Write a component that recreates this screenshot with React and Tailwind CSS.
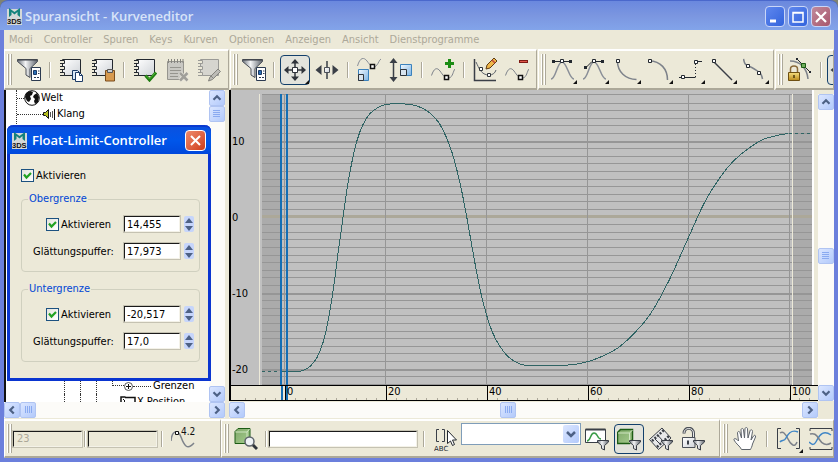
import { useState } from 'react';
import clsx from 'clsx';

const MENU = ['Modi', 'Controller', 'Spuren', 'Keys', 'Kurven', 'Optionen', 'Anzeigen', 'Ansicht', 'Dienstprogramme'];

// curve keys in plot coordinates
const CURVE = [
  [22, 281], [36, 281], [44, 280], [51, 276], [58, 267], [64, 252], [69, 231], [74, 201], [79, 163],
  [84, 127], [88, 99], [93, 71], [98, 50], [104, 34], [111, 23], [121, 16], [131, 13.5], [146, 13.5],
  [158, 15.500], [169, 21], [179, 31], [187, 46], [193, 62], [198, 80], [203, 102], [208, 128], [216, 173],
  [222, 203], [228, 226], [234, 243], [241, 256], [249, 266], [258, 272], [268, 275], [301, 275],
  [321, 273], [338, 268], [358, 258], [374, 244], [391, 224], [410, 190], [429, 148], [445, 113],
  [461, 87], [474, 71], [488, 59], [504, 49], [518, 45], [529, 43],
];

function smoothPath(pts) {
  let d = `M${pts[0][0]} ${pts[0][1]}`;
  for (let i = 0; i < pts.length - 1; i++) {
    const a = pts[i - 1] || pts[i];
    const b = pts[i];
    const c = pts[i + 1];
    const e = pts[i + 2] || c;
    d += `C${b[0] + (c[0] - a[0]) / 6} ${b[1] + (c[1] - a[1]) / 6} ${c[0] - (e[0] - b[0]) / 6} ${c[1] - (e[1] - b[1]) / 6} ${c[0]} ${c[1]}`;
  }
  return d;
}

/* ---------- icons ---------- */

function Icon({ children, className = 'w-6 h-6' }) {
  return (
    <svg viewBox="0 0 24 24" className={clsx('shrink-0', className)} fill="none" stroke="#3a3f47" aria-hidden="true">
      {children}
    </svg>
  );
}

function Defs() {
  return (
    <svg className="absolute w-0 h-0" aria-hidden="true">
      <defs>
        <linearGradient id="metal" x1="0" x2="1">
          <stop offset="0" stopColor="#6d737b" />
          <stop offset=".4" stopColor="#f4f5f6" />
          <stop offset="1" stopColor="#5d636b" />
        </linearGradient>
        <linearGradient id="page" x1="0" x2="1" y2="1">
          <stop offset="0" stopColor="#ffffff" />
          <stop offset="1" stopColor="#cfd3d8" />
        </linearGradient>
        <linearGradient id="gold" y2="1" x2="0">
          <stop offset="0" stopColor="#f6dd7e" />
          <stop offset="1" stopColor="#b98a1c" />
        </linearGradient>
        <linearGradient id="blue" x2="1" y2="1">
          <stop offset="0" stopColor="#f2f9ff" />
          <stop offset="1" stopColor="#7db4e4" />
        </linearGradient>
        <linearGradient id="green" x2="1" y2="1">
          <stop offset="0" stopColor="#7fa869" />
          <stop offset="1" stopColor="#a5cc8e" />
        </linearGradient>
      </defs>
    </svg>
  );
}

const FilterIcon = () => (
  <Icon>
    <path d="M.5 1.500h20v2l-7.500 7v9l-4-2.500V10.500L.5 3.500z" fill="url(#metal)" stroke="#4a4f57" />
    <path d="M1 2h19" stroke="#3a3f47" />
    <path d="M14.500 9.500h9v13h-9z" fill="#fff" stroke="#2b3a50" />
    <path d="M16.500 12.500h3v4h-3z" fill="#2a6fb5" stroke="#1c3b66" />
    <path d="M21 13h1.500M21 15.500h1.500M17 19.500h2M20 19.500h2" stroke="#2b3a50" />
  </Icon>
);

function Notebook({ dim, children }) {
  const c = dim ? '#9a9a96' : '#23282f';
  return (
    <Icon>
      <path d="M3.500 1.500h18v16h-18z" fill={dim ? '#d6d5cf' : 'url(#page)'} stroke={c} />
      {[3, 9, 15].map(y => (
        <path key={y} d={`M1 ${y - .5}h4.500v3H1`} stroke={c} fill="#ece9d8" />
      ))}
      {children}
    </Icon>
  );
}

const CopyIcon = () => (
  <Notebook>
    <path d="M13.500 12.500h5l2 2v7h-7z" fill="#dbe9f7" stroke="#1c3b66" />
    <path d="M16.500 14.500h4l3 3v6h-7z" fill="#fff" stroke="#1c3b66" />
    <path d="M20.500 14.500v3h3" stroke="#1c3b66" />
  </Notebook>
);

const PasteIcon = () => (
  <Notebook>
    <path d="M14.500 12.500h9v10.500h-9z" fill="#d79a50" stroke="#7a4d1c" />
    <path d="M16.500 11.500h5v3h-5z" fill="#c9ccd0" stroke="#555" />
  </Notebook>
);

const CheckIcon = () => (
  <Notebook>
    <path d="M12.500 17.500l4 4.500L23 14.500" stroke="#1f7d12" strokeWidth="3" />
    <path d="M13 17.500l3.500 3.500L22.500 14.500" stroke="#52b933" />
  </Notebook>
);

const DeletePadIcon = () => (
  <Icon>
    <path d="M2.500 3.500h16v18h-16z" fill="#c9c8c3" stroke="#96958f" />
    <path d="M3.500 1v4M6.500 1v4M9.500 1v4M12.500 1v4M15.500 1v4M18 1v4" stroke="#85847f" />
    <path d="M5 9.500h11M5 12.500h11M5 15.500h8M5 18.500h8" stroke="#96958f" />
    <path d="M15 15l7.500 7.500M22.500 15L15 22.500" stroke="#e8e6dc" strokeWidth="4" />
    <path d="M15 15l7.500 7.500M22.500 15L15 22.500" stroke="#a09f9a" strokeWidth="2.500" />
  </Icon>
);

const EditPadIcon = () => (
  <Notebook dim>
    <path d="M11.500 23l1.500-4 8-8 2.500 2.500-8 8z" fill="#bcbbb6" stroke="#85847f" />
    <path d="M14 18l3 3" stroke="#85847f" />
  </Notebook>
);

const MoveIcon = () => (
  <Icon>
    <path d="M12 3v6M12 15v6M3 12h6M15 12h6" stroke="#2f343b" strokeWidth="1.500" />
    <path d="M12 1l4 4.500H8zM12 23l4-4.500H8zM1 12l4.500-4v8zM23 12l-4.500-4v8z" fill="#2f343b" stroke="none" />
    <path d="M9.500 9.500h5v5h-5z" fill="#fff" stroke="#2f343b" />
  </Icon>
);

const SlideIcon = () => (
  <Icon>
    <path d="M.5 12l6-5v10zM23.500 12l-6-5v10z" fill="#3a3f47" stroke="none" />
    <path d="M12 3v18" strokeWidth="1.500" />
    <path d="M9.500 9.500h5v5h-5z" fill="url(#page)" stroke="#4a4f57" />
  </Icon>
);

const ScaleKeysIcon = () => (
  <Icon>
    <path d="M.5 8C3-1 7-1 10 3s6 8 9 5 3-6 5-7" stroke="#8a8f98" />
    <path d="M13.500 6.500h4v4h-4z" fill="#fff" stroke="#111" strokeWidth="1.500" />
    <path d="M1.500 11.500h10v11h-10z" fill="url(#blue)" stroke="#3b82bd" />
    <path d="M1.500 16.500h5v6h-5z" fill="#d8e4ee" stroke="#2f343b" />
  </Icon>
);

const ScaleValuesIcon = () => (
  <Icon>
    <path d="M4.500 4v16" strokeWidth="1.500" />
    <path d="M4.500 0l4 5h-8zM4.500 24l4-5h-8z" fill="#3a3f47" stroke="none" />
    <path d="M11.500 6.500h11v11h-11z" fill="url(#blue)" stroke="#3b82bd" />
    <path d="M11.500 11.500h6v6h-6z" fill="#d8e4ee" stroke="#2f343b" />
  </Icon>
);

const Wave = () => (
  <>
    <path d="M.5 17.500C3 10 6 9 9 13s5 8 9 7 4-7 6-9" stroke="#7d828a" />
    <path d="M13.500 17.500h4v4h-4z" fill="#fff" stroke="#111" strokeWidth="1.500" />
  </>
);

const AddKeyIcon = () => (
  <Icon>
    <Wave />
    <path d="M18.500 1v9M14 5.500h9" stroke="#1c8c14" strokeWidth="3" />
  </Icon>
);

const RemoveKeyIcon = () => (
  <Icon>
    <Wave />
    <path d="M14 3.500h9" stroke="#7f1b14" strokeWidth="3" />
    <path d="M15 3.500h7" stroke="#e0564a" />
  </Icon>
);

const DrawCurveIcon = () => (
  <Icon>
    <path d="M1.500 1v21.500H23" strokeWidth="1.500" />
    <path d="M3 4c3 6 5 13 13 13 4 0 6-2 7-5" stroke="#5d636b" />
    <path d="M6.500 9.500h3v3h-3zM14.500 15.500h3v3h-3z" fill="#fff" stroke="#2f343b" />
    <path d="M13 11l1-4 7-7 3 3-7 7z" fill="#f0b748" stroke="#5c3a12" />
    <path d="M19 2l3 3" stroke="#c24c3a" strokeWidth="1.500" />
  </Icon>
);

const TangentAuto = () => (
  <Icon>
    <path d="M0 21C5 21 6 4 11 4s7 17 12 17" stroke="#8a8f98" strokeWidth="1.500" />
    <path d="M2 3.500h18" stroke="#23282f" />
    <path d="M1 2h3v3H1zM18 2h3v3h-3z" fill="#23282f" stroke="none" />
    <path d="M9.500 1.500h3v3h-3z" fill="#fff" stroke="#23282f" />
  </Icon>
);

const TangentSpline = () => (
  <Icon>
    <path d="M0 21C5 21 6 4 11 4s7 17 12 17" stroke="#8a8f98" strokeWidth="1.500" />
    <path d="M3 9.500l6-6h11" stroke="#23282f" />
    <path d="M1 8h3v3H1zM18 2h3v3h-3z" fill="#23282f" stroke="none" />
    <path d="M9.500 1.500h3v3h-3z" fill="#fff" stroke="#23282f" />
  </Icon>
);

const TangentFast = () => (
  <Icon>
    <path d="M2.500 3.500c0 10 8 18 19 18" stroke="#7d828a" strokeWidth="1.500" />
    <path d="M1.500 1.500h3v3h-3z" fill="#fff" stroke="#23282f" />
  </Icon>
);

const TangentSlow = () => (
  <Icon>
    <path d="M2.500 3c11 0 18 8 18 19" stroke="#7d828a" strokeWidth="1.500" />
    <path d="M1.500 1.500h3v3h-3z" fill="#fff" stroke="#23282f" />
  </Icon>
);

const TangentStep = () => (
  <Icon>
    <path d="M0 19.500h16.500" stroke="#23282f" />
    <path d="M16.500 19V4" stroke="#23282f" strokeDasharray="1 2" />
    <path d="M17 3.500h6" stroke="#23282f" />
    <path d="M2.500 17.500h3v3h-3zM15.500 2.500h3v3h-3z" fill="#fff" stroke="#23282f" />
  </Icon>
);

const TangentLinear = () => (
  <Icon>
    <path d="M2 3l19 19" stroke="#3a3f47" strokeWidth="1.500" />
    <path d="M1.500 1.500h3v3h-3z" fill="#fff" stroke="#23282f" />
  </Icon>
);

const TangentSmooth = () => (
  <Icon>
    <path d="M.5 1c1 5 2 6 5 7s6 3 9 5 4 3 5 8" stroke="#7d828a" strokeWidth="1.500" />
    <path d="M3.500 6.500h3v3h-3zM14.500 13.500h3v3h-3z" fill="#fff" stroke="#23282f" />
  </Icon>
);

const LockTangentIcon = () => (
  <Icon>
    <path d="M2 3c10 0 17 7 18 18" stroke="#7d828a" strokeWidth="1.500" />
    <path d="M9 1l13 13" stroke="#23282f" />
    <path d="M8 0h2v2H8zM21 13h2v2h-2z" fill="#23282f" stroke="none" />
    <path d="M13.500 5.500h4v4h-4z" fill="#6fae5c" stroke="#1c5c14" />
    <path d="M2.500 15v-4c0-4 7-4 7 0v4" stroke="#8a6a3a" strokeWidth="1.500" />
    <path d="M.5 14.500h11v8H.5z" fill="url(#gold)" stroke="#6e4f10" />
    <path d="M6 17v3" stroke="#4d370b" strokeWidth="1.500" />
  </Icon>
);

const ParamCurveIcon = () => (
  <Icon>
    <path d="M1 4.500l3-3h12v11l-3 4H1z" fill="url(#green)" stroke="#1c5c14" />
    <path d="M1.500 5h11.500V16M13 5l2.500-3" stroke="#cfe6c2" />
    <circle cx="15.500" cy="14.500" r="4.500" fill="#eef2f5" stroke="#5d636b" strokeWidth="1.500" />
    <path d="M19 18l4 4" stroke="#2f343b" strokeWidth="3" />
  </Icon>
);

const SmallFunnel = () => (
  <path d="M12.500 13.500h11v1.500l-4 3.500v4.500l-3-1.500v-3l-4-3.500z" fill="url(#metal)" stroke="#3a3f47" />
);

const CurveFilterIcon = () => (
  <Icon>
    <path d="M.5 2.500h20v13H.5z" fill="#fff" stroke="#3a3f47" />
    <path d="M.5 2.500h20" stroke="#3a3f47" strokeWidth="2" />
    <path d="M2 14c4 0 3-8 7-8s3 6 7 6" stroke="#3a9c48" strokeWidth="1.500" />
    <SmallFunnel />
  </Icon>
);

const CubeFilterIcon = () => (
  <Icon>
    <path d="M.5 5.500l3-3h12v10l-3 4H.5z" fill="url(#green)" stroke="#1c5c14" strokeWidth="1.500" />
    <path d="M1 6h11.500v10M12.500 6l3-3" stroke="#cfe6c2" />
    <SmallFunnel />
  </Icon>
);

const FilmFilterIcon = () => (
  <Icon>
    <path d="M.5 12.500L13 1l9 10-12.500 11.500z" fill="#e8e9ea" stroke="#3a3f47" />
    <path d="M3 14L15 3M8 20L20 9" stroke="#3a3f47" strokeWidth="2.500" strokeDasharray="2 1.500" />
    <path d="M9 8.500l5 5.500M6 12l5 5" stroke="#3a3f47" />
    <SmallFunnel />
  </Icon>
);

const UnlockFilterIcon = () => (
  <Icon>
    <path d="M3 6.500c0-7 9.500-7 9.500 0v4" stroke="#4a4f57" strokeWidth="3" />
    <path d="M3 6c0-6 9.500-6 9.500 0v5" stroke="#e8e9ea" />
    <path d="M1.500 10.500h12.500v10H1.500z" fill="url(#page)" stroke="#4a4f57" />
    <path d="M7 13.500v4" strokeWidth="2" />
    <SmallFunnel />
  </Icon>
);

const HandIcon = () => (
  <Icon>
    <path
      d="M8.500 22.500C7 19 3 17 1 13c-.5-2 2-2 4.500 1L4.500 6c0-2 2.500-2 2.500 0l1.500 5L8 3c0-2 2.500-2 2.500 0l1 8 .5-9c0-2 2.500-2 2.500 0l.5 9 2-7c.5-2 2.500-1.500 2.500.5L18 13l2.500-4c1-1.500 2.500-.5 2 1l-3 7c-.5 3-1.500 4-2 5.500z"
      fill="#fff" stroke="#5d636b"
    />
  </Icon>
);

const ExtentsHIcon = () => (
  <Icon>
    <path d="M4 1.500H.5v20H4M19 1.500h3.500v20H19" />
    <path d="M3 6c3-2 5 0 8 6s7 9 9 3" stroke="#7d828a" strokeWidth="1.500" />
    <path d="M3 15c2-3 4 0 6-4s5-9 12-6" stroke="#3f86c6" strokeWidth="1.500" />
  </Icon>
);

const ExtentsVIcon = () => (
  <Icon>
    <path d="M1 4V1.500h22V4M1 20v2.500h22V20" />
    <path d="M0 15c3 3 5 4 8-2s7-10 14-5" stroke="#3f86c6" strokeWidth="1.500" />
    <path d="M1 7c4-1 6 0 9 5s7 7 12 4" stroke="#7d828a" strokeWidth="1.500" />
  </Icon>
);

function AppLogo() {
  return (
    <svg viewBox="0 0 16 17" className="w-4 h-[17px] shrink-0" aria-hidden="true">
      <path d="M0 1h15v16H0z" fill="#d4d8d8" />
      <path d="M2 9V0l5.500 4L13 0v9l-2.500-2V4L7.500 6.500 4.500 4v3z" fill="#13827c" />
      <text x="0" y="16" fontSize="7.500" fontWeight="700" fontFamily="Liberation Sans, sans-serif" fill="#111">3DS</text>
    </svg>
  );
}

/* ---------- building blocks ---------- */

const Grip = () => (
  <span className="flex gap-px my-[3px] shrink-0">
    <span className="w-0.5 border-l border-white bg-[#aca899]" />
    <span className="w-0.5 border-l border-white bg-[#aca899]" />
  </span>
);

const Sep = ({ className = 'w-[10px]' }) => (
  <span className={clsx('flex justify-center shrink-0', className)}>
    <span className="w-0.5 h-4 bg-[#aca899] border-r border-white" />
  </span>
);

function ToolPanel({ label, className, children }) {
  return (
    <div
      role="toolbar"
      aria-label={label}
      className={clsx('flex items-center border-t-2 border-l border-t-white border-l-white border-r border-b-2 border-r-[#aca899] border-b-[#aca899] pl-0.5 overflow-hidden', className)}
    >
      <span className="self-stretch flex mr-px"><Grip /></span>
      {children}
    </div>
  );
}

function Tool({ label, active, flyout, children, className = 'w-8' }) {
  return (
    <button
      type="button"
      aria-label={label}
      className={clsx('relative h-8 shrink-0 flex items-center justify-center', className)}
    >
      {active && <span className="absolute inset-px rounded-sm border border-[#123f6b] bg-[#e2e3dc]" />}
      <span className="relative">{children}</span>
      {flyout && (
        <svg viewBox="0 0 4 4" className="absolute right-0.5 bottom-0.5 w-1 h-1" aria-hidden="true">
          <path d="M4 0v4H0z" fill="#111" />
        </svg>
      )}
    </button>
  );
}

function Arrow({ dir }) {
  const rot = { up: 0, right: 90, down: 180, left: 270 }[dir];
  return (
    <svg viewBox="0 0 16 16" className="w-4 h-4" aria-hidden="true">
      <path d="M4 10l4-4 4 4" transform={`rotate(${rot} 8 8)`} fill="none" stroke="#4d6185" strokeWidth="2.500" />
    </svg>
  );
}

const barPart = 'shrink-0 w-4 h-4 flex items-center justify-center rounded-xs border border-[#b0c4f2] bg-linear-to-br from-[#dbe6ff] to-[#b3cafb]';

function ScrollBar({ vertical, before, after, label, className }) {
  return (
    <div role="group" aria-label={label} className={clsx('flex shrink-0 bg-[#fcfbf8]', vertical ? 'flex-col w-4' : 'h-4', className)}>
      <button type="button" aria-label="Zurück" className={barPart}><Arrow dir={vertical ? 'up' : 'left'} /></button>
      <span style={{ flexGrow: before }} />
      <span className={barPart}>
        <svg viewBox="0 0 8 8" className={clsx('w-2 h-2', !vertical && 'rotate-90')} aria-hidden="true">
          <path d="M0 .5h7M0 2.500h7M0 4.500h7M0 6.500h7" stroke="#8aaaf0" />
        </svg>
      </span>
      <span style={{ flexGrow: after }} />
      <button type="button" aria-label="Weiter" className={barPart}><Arrow dir={vertical ? 'down' : 'right'} /></button>
    </div>
  );
}

function Check({ children }) {
  const [on, setOn] = useState(true);
  return (
    <label className="flex items-center gap-0.5">
      <span className="relative w-[13px] h-[13px]">
        <input
          type="checkbox"
          checked={on}
          onChange={() => setOn(!on)}
          className="block appearance-none w-[13px] h-[13px] border border-[#1c5180] bg-linear-to-br from-[#e4e4de] to-white"
        />
        {on && (
          <svg viewBox="0 0 13 13" className="absolute inset-0 pointer-events-none" aria-hidden="true">
            <path d="M3 5.500l2.500 3L10 4" fill="none" stroke="#21a121" strokeWidth="2.200" />
          </svg>
        )}
      </span>
      {children}
    </label>
  );
}

const sunken = 'h-4 border border-t-[#1a1a1a] border-l-[#1a1a1a] border-r-[#f4f2e8] border-b-[#f4f2e8] outline-1 outline-[#c5c2b2] -outline-offset-0';

function Spinner({ id, label, initial }) {
  const [value, setValue] = useState(initial);
  const step = n => setValue((parseFloat(value.replace(',', '.')) + n).toFixed(3).replace('.', ','));
  return (
    <div className="flex items-center gap-1">
      <input
        id={id}
        aria-label={label}
        value={value}
        onChange={e => setValue(e.target.value)}
        className={clsx(sunken, 'w-[56px] bg-white pl-0.5 leading-3')}
      />
      <span className="flex flex-col w-2.5 h-4 rounded-xs bg-[#c6d5fb]">
        <button type="button" aria-label="Erhöhen" onClick={() => step(1)} className="h-2 flex items-center justify-center">
          <svg viewBox="0 0 8 5" className="w-2 h-[5px]" aria-hidden="true"><path d="M0 5l4-5 4 5z" fill="#4d6185" /></svg>
        </button>
        <button type="button" aria-label="Verringern" onClick={() => step(-1)} className="h-2 flex items-center justify-center">
          <svg viewBox="0 0 8 5" className="w-2 h-[5px]" aria-hidden="true"><path d="M0 0l4 5 4-5z" fill="#4d6185" /></svg>
        </button>
      </span>
    </div>
  );
}

function LimitGroup({ title, name, limit, buffer }) {
  return (
    <fieldset className="min-w-0 h-[79px] border border-[#d0d0bf] rounded px-1 pr-[5px]">
      <legend className="ml-0.5 px-px leading-3 text-[#0046d5]">{title}</legend>
      <div className="flex items-center justify-between mt-[11px] pl-5">
        <Check>Aktivieren</Check>
        <Spinner label={title} initial={limit} />
      </div>
      <div className="flex items-center justify-between mt-[11px] pl-[7px]">
        <label htmlFor={name}>Glättungspuffer:</label>
        <Spinner id={name} initial={buffer} />
      </div>
    </fieldset>
  );
}

function LimitDialog({ onClose }) {
  return (
    <div
      role="dialog"
      aria-label="Float-Limit-Controller"
      className="absolute left-[7px] top-[125px] w-[204px] rounded-t-md border-3 border-t-0 border-[#0a35d0] bg-[#ece9d8]"
    >
      <div className="-mx-[3px] h-[29px] rounded-t-md flex items-center pl-[5px] pr-[5px] gap-1 bg-linear-to-b from-[#0a52e0] via-[#0056ea] to-[#0048dc] border-t-2 border-[#0a3ad0]">
        <AppLogo />
        <span className="flex-1 font-['Open_Sans',sans-serif] font-semibold text-[13px] text-white whitespace-nowrap">Float-Limit-Controller</span>
        <button
          type="button"
          aria-label="Schließen"
          onClick={onClose}
          className="shrink-0 w-[21px] h-[21px] flex items-center justify-center rounded-sm border border-white bg-linear-to-br from-[#ee8a6c] to-[#cf3a12]"
        >
          <svg viewBox="0 0 13 13" className="w-[13px] h-[13px]" aria-hidden="true">
            <path d="M2 2l9 9M11 2l-9 9" stroke="#fff" strokeWidth="2" />
          </svg>
        </button>
      </div>
      <div className="pt-[15px] px-[11px] pr-2 pb-4">
        <Check>Aktivieren</Check>
        <div className="flex flex-col gap-[11px] mt-[11px]">
          <LimitGroup title="Obergrenze" name="obergrenze-puffer" limit="14,455" buffer="17,973" />
          <LimitGroup title="Untergrenze" name="untergrenze-puffer" limit="-20,517" buffer="17,0" />
        </div>
      </div>
    </div>
  );
}

function Tree() {
  return (
    <div className="flex-1 min-w-0 flex flex-col justify-between overflow-hidden bg-white border-l-2 border-[#111] leading-4">
      <ul className="ml-2.5 pb-4 border-l border-dotted border-[#333]">
        <li className="h-4 flex items-center">
          <span className="w-[7px] border-t border-dotted border-[#333]" />
          <svg viewBox="0 0 16 16" className="w-4 h-4 mr-px" aria-hidden="true">
            <circle cx="8" cy="8" r="7.300" fill="#fff" stroke="#111" />
            <path d="M2 3l4-2 3 1-1 3-2 1 1 3-2 3-2-1-2-4zM10 5l3-2 2 4-1 5-3 2-1-3 1-2-2-2z" fill="#111" />
          </svg>
          Welt
        </li>
        <li className="h-4 flex items-center">
          <span className="w-[26px] border-t border-dotted border-[#333]" />
          <svg viewBox="0 0 12 12" className="w-3 h-3 mr-0.5" aria-hidden="true">
            <path d="M.5 4.500h2l3-3v9l-3-3h-2z" fill="#b8c020" stroke="#111" />
            <path d="M7.500 4v5M9.500 3v7" stroke="#555" />
            <path d="M11.500 1v11" stroke="#111" />
          </svg>
          Klang
        </li>
      </ul>
      <ul className="pl-[58px] shrink-0 -mb-2">
        {['Grenzen', 'X-Position'].map((name, i) => (
          <li key={name} className="h-4 flex items-center">
            {[0, 1, 2].map(n => <span key={n} className="w-4 h-4 shrink-0 border-l border-dotted border-[#333]" />)}
            {i === 0 ? (
              <>
                <span className="w-3 h-2 mb-2 shrink-0 border-l border-b border-dotted border-[#333]" />
                <svg viewBox="0 0 9 9" className="w-[9px] h-[9px] shrink-0" aria-hidden="true">
                  <circle cx="4.500" cy="4.500" r="4" fill="#fff" stroke="#555" />
                  <path d="M2 4.500h5M4.500 2v5" stroke="#111" />
                </svg>
                <span className="w-[18px] shrink-0 mr-0.5 border-t border-dotted border-[#333]" />
              </>
            ) : (
              <svg viewBox="0 0 16 12" className="w-4 h-3 ml-2 mr-px shrink-0" aria-hidden="true">
                <path d="M5.500 1H1v10h4M5 1.500h10v10H5" fill="none" stroke="#111" strokeWidth="1.500" />
                <path d="M3 3l2 2-2 2" fill="none" stroke="#111" />
              </svg>
            )}
            <span className="whitespace-nowrap">{name}</span>
          </li>
        ))}
      </ul>
    </div>
  );
}

function Plot() {
  const rows = Array.from({ length: 39 }, (_, i) => 16 - i);
  return (
    <svg viewBox="0 0 553 295" preserveAspectRatio="none" className="flex-1 min-w-0 h-full" shapeRendering="crispEdges" role="img" aria-label="Funktionskurve">
      <rect width="553" height="295" fill="#c0c0c0" />
      <rect x="3" y="4" width="18" height="291" fill="#ababab" />
      <rect x="534" y="4" width="19" height="291" fill="#ababab" />
      {rows.map(v => {
        const y = v === 16 ? 4 : Math.round(126.500 - v * 7.600);
        if (v === 0) return <rect key={v} x="3" y="125" width="550" height="3" fill="#aca899" />;
        return <rect key={v} x="3" y={y} width="550" height={v % 10 === 0 ? 2 : 1} fill="#969696" />;
      })}
      {[25, 126, 227, 328, 429, 530].map(x => (
        <rect key={x} x={x} y="4" width="1" height="291" fill="#969696" />
      ))}
      <rect x="0" y="4" width="1" height="291" fill="#ece9d8" />
      <rect x="533" y="4" width="1" height="291" fill="#ece9d8" />
      <path d="M3 281.500h19M530 43.500h23" stroke="#2f6464" strokeDasharray="3 3" />
      <path d={smoothPath(CURVE)} transform="translate(0 .5)" fill="none" stroke="#2f6464" />
      <rect x="21" y="4" width="2" height="291" fill="#146eb4" />
      <rect x="27" y="4" width="2" height="291" fill="#146eb4" />
    </svg>
  );
}

function Ruler() {
  return (
    <div className="relative h-4 shrink-0 bg-[#ece9d8] border-y border-t-black border-b-black">
      <svg viewBox="0 0 587 14" preserveAspectRatio="none" className="absolute inset-0 w-full h-full" shapeRendering="crispEdges" aria-hidden="true">
        {Array.from({ length: 57 }, (_, i) => (
          <rect key={i} x={Math.round(14 + i * 10.080)} y="12" width="1" height="2" fill="#aca899" />
        ))}
        {[54, 155, 256, 357, 458, 559].map(x => <rect key={x} x={x} width="1" height="14" fill="#000" />)}
        <rect x="50" width="2" height="14" fill="#146eb4" />
        <rect x="55" width="2" height="14" fill="#146eb4" />
      </svg>
      <div className="relative grid grid-cols-[repeat(5,101fr)_26fr] pl-14 leading-3">
        {[0, 20, 40, 60, 80, 100].map(n => <span key={n} className="min-w-0">{n}</span>)}
      </div>
    </div>
  );
}

function CaptionButton({ label, close, children }) {
  return (
    <button
      type="button"
      aria-label={label}
      className={clsx(
        'w-5 h-[21px] rounded-sm border border-[#c9d6f8] flex items-center justify-center',
        close ? 'bg-linear-to-br from-[#c08a9c] to-[#a8566c]' : 'bg-linear-to-br from-[#5f87ee] to-[#3263dc]'
      )}
    >
      <svg viewBox="0 0 14 14" className="w-3.5 h-3.5" fill="none" stroke="#fff" aria-hidden="true">{children}</svg>
    </button>
  );
}

export default function App() {
  const [dialogOpen, setDialogOpen] = useState(true);

  return (
    <div className="relative h-screen flex flex-col overflow-hidden bg-[#7f8272] text-black text-[11px] leading-[13px] font-['DejaVu_Sans_Condensed','Noto_Sans',sans-serif]">
      <Defs />

      {/* Title bar */}
      <header className="h-[30px] shrink-0 rounded-t-lg flex items-center pt-0.5 px-[7px] border-t border-[#4a68cc] bg-linear-to-b from-[#6a88de] via-[#7b96e0] to-[#82a4ea]">
        <AppLogo />
        <h1 className="flex-1 ml-0.5 font-['Open_Sans',sans-serif] font-semibold text-[13px] text-[#d8e4f8] whitespace-nowrap">Spuransicht - Kurveneditor</h1>
        <div className="flex gap-[3px]">
          <CaptionButton label="Minimieren"><path d="M2 11h6" strokeWidth="3" /></CaptionButton>
          <CaptionButton label="Maximieren"><path d="M2 2.500h10v9.500H2zM2 3h10" strokeWidth="1.500" /></CaptionButton>
          <CaptionButton label="Schließen" close><path d="M2 2l10 10M12 2L2 12" strokeWidth="2.200" /></CaptionButton>
        </div>
      </header>

      <div className="flex-1 min-h-0 flex flex-col border-x-4 border-b-4 border-[#6b7fdc] bg-[#ece9d8]">
        <nav className="h-[19px] shrink-0 flex items-center gap-[11px] pl-[5px] text-[#aca899]">
          {MENU.map(m => <button key={m} type="button">{m}</button>)}
        </nav>

        <div className="h-[41px] shrink-0 flex gap-px overflow-hidden">
          <ToolPanel label="Controller" className="w-[225px] shrink-0">
            <Tool label="Filter"><FilterIcon /></Tool>
            <Sep />
            <Tool label="Kopieren"><CopyIcon /></Tool>
            <Tool label="Einfügen"><PasteIcon /></Tool>
            <Sep />
            <Tool label="Zuweisen"><CheckIcon /></Tool>
            <Tool label="Löschen"><DeletePadIcon /></Tool>
            <Tool label="Bearbeiten"><EditPadIcon /></Tool>
          </ToolPanel>
          <ToolPanel label="Keys" className="w-[307px] shrink-0">
            <Tool label="Filter" className="w-[30px]"><FilterIcon /></Tool>
            <Sep />
            <Tool label="Keys verschieben" active flyout><MoveIcon /></Tool>
            <Tool label="Keys schieben"><SlideIcon /></Tool>
            <Sep />
            <Tool label="Keys skalieren"><ScaleKeysIcon /></Tool>
            <Tool label="Werte skalieren"><ScaleValuesIcon /></Tool>
            <Sep />
            <Tool label="Keys hinzufügen"><AddKeyIcon /></Tool>
            <Sep />
            <Tool label="Kurven zeichnen"><DrawCurveIcon /></Tool>
            <Tool label="Keys reduzieren"><RemoveKeyIcon /></Tool>
          </ToolPanel>
          <ToolPanel label="Tangenten" className="w-[236px] shrink-0">
            <Tool label="Auto" flyout><TangentAuto /></Tool>
            <Tool label="Spline" flyout><TangentSpline /></Tool>
            <Tool label="Schnell" flyout><TangentFast /></Tool>
            <Tool label="Langsam" flyout><TangentSlow /></Tool>
            <Tool label="Stufe" flyout><TangentStep /></Tool>
            <Tool label="Linear" flyout><TangentLinear /></Tool>
            <Tool label="Glatt" flyout><TangentSmooth /></Tool>
          </ToolPanel>
          <ToolPanel label="Tangentenaktionen" className="flex-1 min-w-0">
            <Tool label="Tangenten sperren"><LockTangentIcon /></Tool>
            <Sep />
            <Tool label="Verknüpfen" active><SlideIcon /></Tool>
          </ToolPanel>
        </div>

        <main className="flex-1 min-h-0 flex">
          {/* Controller tree */}
          <section className="w-[221px] shrink-0 flex flex-col">
            <div className="flex-1 min-h-0 flex">
              <Tree />
              <ScrollBar vertical before={0} after={1} label="Baum vertikal" />
            </div>
            <ScrollBar before={0} after={1} label="Baum horizontal" />
            <span className="h-px" />
          </section>

          {/* Curve view */}
          <section className="flex-1 min-w-0 flex flex-col ml-1">
            <div className="flex-1 min-h-0 flex">
              <div className="flex-1 min-w-0 flex flex-col border-l-2 border-black">
                <div className="flex-1 min-h-0 flex">
                  <div className="w-7 shrink-0 bg-[#c0c0c0] pt-[13px] overflow-hidden">
                    {[10, 0, -10, -20].map(n => (
                      <div key={n} className="h-[76px] flex items-center pl-px">{n}</div>
                    ))}
                  </div>
                  <Plot />
                  <span className="w-[6px] shrink-0 bg-[#ece9d8] border-l-2 border-white" />
                </div>
                <Ruler />
              </div>
              <ScrollBar vertical before={139} after={121} label="Kurven vertikal" className="mt-1" />
            </div>
            <div className="flex flex-col pr-4 py-px">
              <ScrollBar before={255} after={285} label="Kurven horizontal" />
            </div>
          </section>
        </main>

        <footer className="h-[39px] shrink-0 flex overflow-hidden">
          <ToolPanel label="Key-Status" className="w-[217px] shrink-0">
            <input aria-label="Frame" disabled defaultValue="23" className={clsx(sunken, 'w-[69px] px-[3px] leading-3 text-[#aca899]')} />
            <Sep className="w-[6px]" />
            <input aria-label="Wert" disabled className={clsx(sunken, 'w-[69px] px-0.5')} />
            <Sep className="w-[10px]" />
            <Tool label="Key-Statistik anzeigen" className="w-8">
              <Icon>
                <path d="M0 14C1 3 7 2 10 10s6 14 13 6" stroke="#7d828a" strokeWidth="1.500" />
                <path d="M4.500 4.500h3v3h-3z" fill="#fff" stroke="#111" />
                <text x="10" y="8" fontSize="10" fill="#111" stroke="none" className="font-['DejaVu_Sans_Condensed',sans-serif]">4.2</text>
              </Icon>
            </Tool>
          </ToolPanel>
          <ToolPanel label="Auswahl" className="flex-1 min-w-0">
            <Tool label="Objekt suchen"><ParamCurveIcon /></Tool>
            <Sep className="w-[7px]" />
            <input aria-label="Name suchen" className={clsx(sunken, 'flex-1 min-w-0 bg-white px-0.5')} />
            <Sep className="w-[14px]" />
            <Tool label="Auswahlsatz bearbeiten" className="w-[30px]">
              <Icon>
                <path d="M5 2.500H2.500v12H5M8 2.500h2.500v12H8" />
                <path d="M13.500 3.500v13l3-2.500 2 4.500 2-1-2-4.500h4z" fill="#fff" stroke="#23282f" />
                <text x="0" y="23.500" fontSize="7" fill="#23282f" stroke="none" className="font-['DejaVu_Sans',sans-serif]">ABC</text>
              </Icon>
            </Tool>
            <span className="relative self-start mt-0.5 w-[120px] h-[22px] shrink-0">
              <select aria-label="Auswahlsatz" className="appearance-none w-full h-full border border-[#7f9db9] bg-white pl-1">
                <option></option>
              </select>
              <span className="absolute right-0.5 top-0.5 w-4 h-[18px] flex items-center justify-center rounded-xs bg-linear-to-br from-[#dbe6ff] to-[#b3cafb] pointer-events-none">
                <Arrow dir="down" />
              </span>
            </span>
            <Tool label="Kurvenfilter"><CurveFilterIcon /></Tool>
            <Tool label="Objektfilter" active><CubeFilterIcon /></Tool>
            <Tool label="Spurfilter"><FilmFilterIcon /></Tool>
            <Tool label="Sperrfilter" className="w-8 mr-2.5"><UnlockFilterIcon /></Tool>
          </ToolPanel>
          <ToolPanel label="Navigation" className="w-[114px] shrink-0">
            <Tool label="Pan"><HandIcon /></Tool>
            <Sep className="w-3" />
            <Tool label="Horizontale Ausdehnung" flyout><ExtentsHIcon /></Tool>
            <Tool label="Vertikale Ausdehnung"><ExtentsVIcon /></Tool>
          </ToolPanel>
        </footer>
      </div>

      {dialogOpen && <LimitDialog onClose={() => setDialogOpen(false)} />}
    </div>
  );
}
